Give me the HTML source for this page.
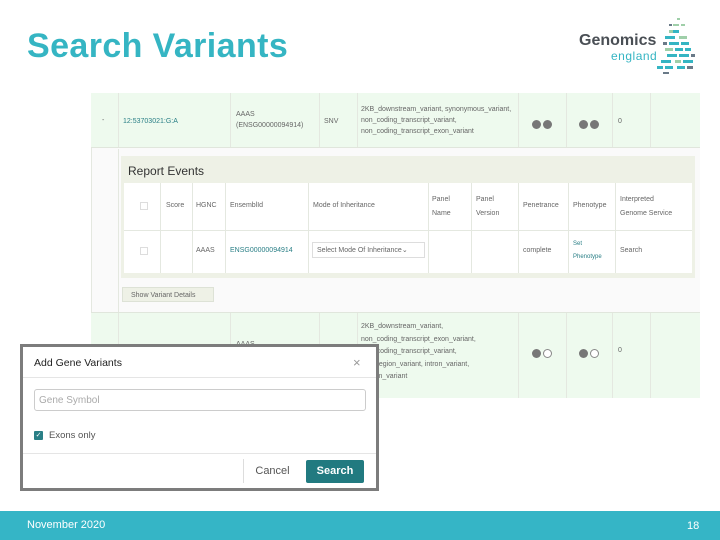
<!DOCTYPE html>
<html><head><meta charset="utf-8"><style>
*{margin:0;padding:0;box-sizing:border-box}
body{width:720px;height:540px;position:relative;background:#fff;font-family:"Liberation Sans",sans-serif;overflow:hidden}
.a{position:absolute}
.t{font-size:7px;color:#666;line-height:11px}
.l{color:#2a7f86}
.v{position:absolute;top:0;bottom:0;width:1px;background:#e4e8e0}
.dot{display:inline-block;width:9px;height:9px;border-radius:50%;background:#777;margin-right:2px}
.dot.o{background:#fff;border:1px solid #888}
</style></head><body>
<div class="a" style="left:27px;top:27px;font-size:34px;font-weight:bold;color:#35b5c3;letter-spacing:0.4px">Search Variants</div>

<!-- logo -->
<div class="a" style="left:579px;top:32px;font-size:16px;font-weight:bold;color:#4a4f55">Genomics</div>
<div class="a" style="left:611px;top:49px;font-size:12px;color:#35b5c3;letter-spacing:0.5px">england</div>
<svg class="a" style="left:655px;top:16px" width="45" height="60">
<g fill="#9fcfa9"><rect x="22" y="2" width="3" height="2"/><rect x="18" y="8" width="6" height="2"/><rect x="26" y="8" width="4" height="2"/><rect x="14" y="14" width="8" height="3"/><rect x="24" y="20" width="8" height="3"/><rect x="10" y="32" width="8" height="3"/><rect x="20" y="44" width="6" height="3"/></g>
<g fill="#35b5c3"><rect x="18" y="14" width="6" height="3"/><rect x="10" y="20" width="10" height="3"/><rect x="14" y="26" width="10" height="3"/><rect x="26" y="26" width="8" height="3"/><rect x="20" y="32" width="8" height="3"/><rect x="30" y="32" width="6" height="3"/><rect x="12" y="38" width="10" height="3"/><rect x="24" y="38" width="10" height="3"/><rect x="6" y="44" width="10" height="3"/><rect x="28" y="44" width="10" height="3"/><rect x="2" y="50" width="6" height="3"/><rect x="10" y="50" width="8" height="3"/><rect x="22" y="50" width="8" height="3"/></g>
<g fill="#6a7a88"><rect x="14" y="8" width="3" height="2"/><rect x="8" y="26" width="4" height="3"/><rect x="36" y="38" width="4" height="3"/><rect x="32" y="50" width="6" height="3"/><rect x="8" y="56" width="6" height="2"/></g>
</svg>

<!-- screenshot area -->
<div class="a" style="left:91px;top:93px;width:609px;height:305px;background:#fafafa;border-left:1px solid #e4e8e0"></div>
<div class="a" style="left:91px;top:93px;width:609px;height:55px;background:#eefaee;border-bottom:1px solid #e0e6dc">
 <div class="v" style="left:27px"></div><div class="v" style="left:139px"></div><div class="v" style="left:228px"></div><div class="v" style="left:266px"></div><div class="v" style="left:427px"></div><div class="v" style="left:475px"></div><div class="v" style="left:521px"></div><div class="v" style="left:559px"></div>
 <div class="a t" style="left:11px;top:22px">-</div>
 <div class="a t l" style="left:32px;top:23px">12:53703021:G:A</div>
 <div class="a t" style="left:145px;top:16px">AAAS<br>(ENSG00000094914)</div>
 <div class="a t" style="left:233px;top:23px">SNV</div>
 <div class="a t" style="left:270px;top:11px">2KB_downstream_variant, synonymous_variant,<br>non_coding_transcript_variant,<br>non_coding_transcript_exon_variant</div>
 <div class="a" style="left:441px;top:23px"><span class="dot"></span><span class="dot"></span></div>
 <div class="a" style="left:488px;top:23px"><span class="dot"></span><span class="dot"></span></div>
 <div class="a t" style="left:527px;top:23px">0</div>
</div>
<div class="a" style="left:118px;top:149px;width:1px;height:163px;background:#e4e8e0"></div>

<div class="a" style="left:121px;top:156px;width:574px;height:122px;background:#eef1e6"></div>
<div class="a" style="left:128px;top:164px;font-size:12px;color:#333">Report Events</div>
<div class="a" style="left:124px;top:183px;width:568px;height:90px;background:#fff">
 <div class="a" style="left:0;top:47px;width:568px;height:1px;background:#e4e8e0"></div>
 <div class="v" style="left:36px"></div><div class="v" style="left:68px"></div><div class="v" style="left:101px"></div><div class="v" style="left:184px"></div><div class="v" style="left:304px"></div><div class="v" style="left:347px"></div><div class="v" style="left:394px"></div><div class="v" style="left:444px"></div><div class="v" style="left:491px"></div>
 <div class="a" style="left:16px;top:19px;width:8px;height:8px;border:1px solid #ddd"></div>
 <div class="a" style="left:16px;top:64px;width:8px;height:8px;border:1px solid #ddd"></div>
 <div class="a t" style="left:42px;top:17px">Score</div>
 <div class="a t" style="left:72px;top:17px">HGNC</div>
 <div class="a t" style="left:106px;top:17px">EnsemblId</div>
 <div class="a t" style="left:189px;top:17px">Mode of Inheritance</div>
 <div class="a t" style="left:308px;top:10px;line-height:14px">Panel<br>Name</div>
 <div class="a t" style="left:352px;top:10px;line-height:14px">Panel<br>Version</div>
 <div class="a t" style="left:399px;top:17px">Penetrance</div>
 <div class="a t" style="left:449px;top:17px">Phenotype</div>
 <div class="a t" style="left:496px;top:10px;line-height:14px">Interpreted<br>Genome Service</div>
 <div class="a t" style="left:72px;top:62px">AAAS</div>
 <div class="a t l" style="left:106px;top:62px">ENSG00000094914</div>
 <div class="a t" style="left:188px;top:59px;width:113px;height:16px;border:1px solid #ddd;padding:2px 4px">Select Mode Of Inheritance⌄</div>
 <div class="a t" style="left:399px;top:62px">complete</div>
 <div class="a l" style="left:449px;top:55px;font-size:6px;line-height:13px">Set<br>Phenotype</div>
 <div class="a t" style="left:496px;top:62px">Search</div>
</div>
<div class="a t" style="left:122px;top:287px;width:92px;height:15px;background:#eef1e6;border:1px solid #dde2d6;padding:2px 8px">Show Variant Details</div>

<div class="a" style="left:91px;top:312px;width:609px;height:86px;background:#eefaee;border-top:1px solid #e0e6dc">
 <div class="v" style="left:27px"></div><div class="v" style="left:139px"></div><div class="v" style="left:228px"></div><div class="v" style="left:266px"></div><div class="v" style="left:427px"></div><div class="v" style="left:475px"></div><div class="v" style="left:521px"></div><div class="v" style="left:559px"></div>
 <div class="a t" style="left:145px;top:26px">AAAS</div>
 <div class="a t" style="left:270px;top:8px;line-height:12.5px">2KB_downstream_variant,<br>non_coding_transcript_exon_variant,<br>non_coding_transcript_variant,<br>non_region_variant, intron_variant,<br>stream_variant</div>
 <div class="a" style="left:441px;top:32px"><span class="dot"></span><span class="dot o"></span></div>
 <div class="a" style="left:488px;top:32px"><span class="dot"></span><span class="dot o"></span></div>
 <div class="a t" style="left:527px;top:32px">0</div>
</div>

<!-- modal -->
<div class="a" style="left:20px;top:344px;width:359px;height:147px;border:3px solid #7c7c7c;background:#fff">
 <div class="a" style="left:11px;top:10px;font-size:10.5px;color:#222">Add Gene Variants</div>
 <div class="a" style="left:330px;top:8px;font-size:13px;color:#999">×</div>
 <div class="a" style="left:0;top:30px;width:353px;height:1px;background:#e5e5e5"></div>
 <div class="a" style="left:11px;top:42px;width:332px;height:22px;border:1px solid #ccc;border-radius:3px;font-size:10px;color:#aaa;padding:5px 4px">Gene Symbol</div>
 <div class="a" style="left:11px;top:84px;width:9px;height:9px;background:#2a7f86;border-radius:1px;color:#fff;font-size:7px;line-height:9px;text-align:center">✓</div>
 <div class="a" style="left:26px;top:83px;font-size:9.5px;color:#555">Exons only</div>
 <div class="a" style="left:0;top:106px;width:353px;height:1px;background:#e5e5e5"></div>
 <div class="a" style="left:220px;top:112px;width:58px;height:24px;border-left:1px solid #ddd;font-size:11px;color:#555;text-align:center;line-height:24px">Cancel</div>
 <div class="a" style="left:283px;top:113px;width:58px;height:23px;background:#217a80;border-radius:2px;font-size:11px;font-weight:bold;color:#fff;text-align:center;line-height:23px">Search</div>
</div>

<!-- footer -->
<div class="a" style="left:0;top:511px;width:720px;height:29px;background:#35b5c6"></div>
<div class="a" style="left:27px;top:519px;font-size:11px;color:#fff">November 2020</div>
<div class="a" style="left:687px;top:520px;font-size:11px;color:#fff">18</div>
</body></html>
